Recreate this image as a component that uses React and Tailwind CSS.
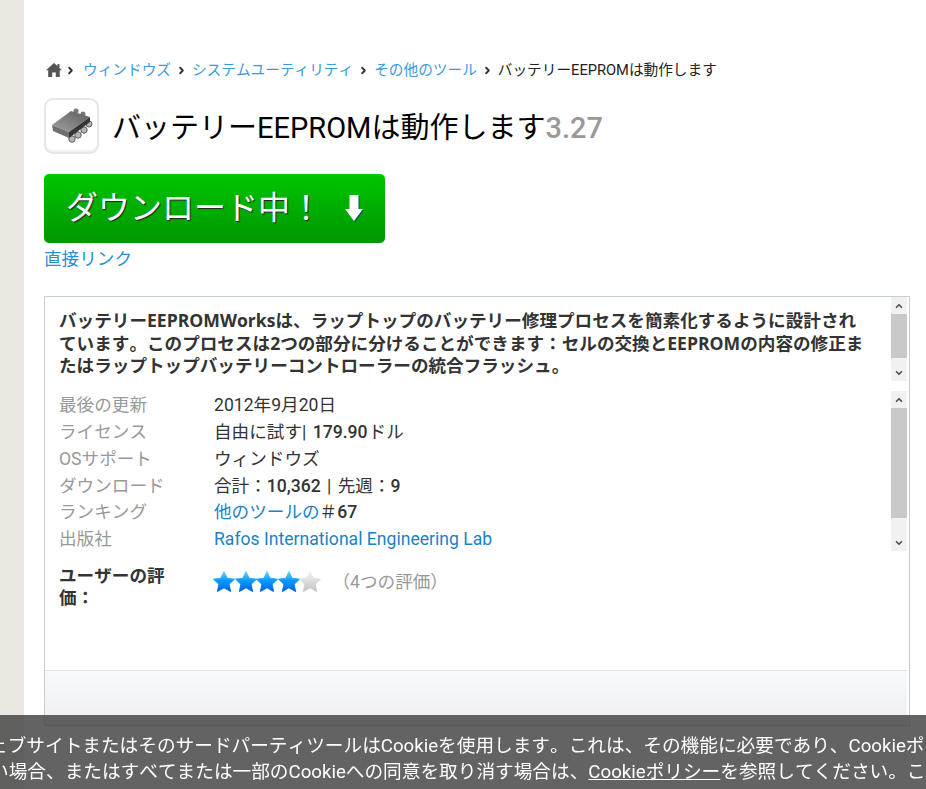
import { ChevronRight, ChevronUp, ChevronDown } from "lucide-react";

const crumbs = ["ウィンドウズ", "システムユーティリティ", "その他のツール"];

const Num = ({ children }) => <span className="font-medium">{children}</span>;

const rows = [
  { label: "最後の更新", value: "2012年9月20日" },
  { label: "ライセンス", value: <>自由に試す| <span className="ml-[2px] font-medium">179.90</span><span className="ml-[1px]">ドル</span></> },
  { label: "OSサポート", value: "ウィンドウズ" },
  { label: "ダウンロード", value: <>合計：<Num>10,362</Num><span className="mx-[2px]"> | </span>先週：<Num>9</Num></> },
  { label: "ランキング", value: <><a className="text-[#1a82c4]">他のツールの</a>＃<Num>67</Num></> },
  { label: "出版社", value: <a className="text-[#1a82c4]">Rafos International Engineering Lab</a> },
];

const Scrollbar = ({ thumb }) => (
  <div className="flex w-[16px] shrink-0 flex-col bg-[#f1f1f1]">
    <div className="flex h-[17px] items-center justify-center">
      <ChevronUp size={10} strokeWidth={4} className="text-[#505050]" />
    </div>
    <div className="bg-[#c8c8c8]" style={{ height: thumb }} />
    <div className="flex-1" />
    <div className="flex h-[17px] items-center justify-center">
      <ChevronDown size={10} strokeWidth={4} className="text-[#505050]" />
    </div>
  </div>
);

const Star = ({ on }) => (
  <svg width="22" height="22" viewBox="0 0 22 22" className="-mr-[0.5px]">
    <path
      d="M11 0.500l3.200 6.800 7.300 .9-5.400 5 1.500 7.300L11 16.800 4.400 20.500l1.500-7.300-5.400-5 7.300-.9z"
      fill={on ? "url(#starOn)" : "url(#starOff)"}
      stroke={on ? "url(#starOn)" : "url(#starOff)"}
      strokeWidth="1"
      strokeLinejoin="round"
    />
  </svg>
);

const ChipIcon = () => (
  <svg width="42" height="36" viewBox="0 0 42 36">
    <defs>
      <linearGradient id="chipTop" x1="0" y1="1" x2="1" y2="0">
        <stop offset="0" stopColor="#a2a2a2" />
        <stop offset="1" stopColor="#5c5c5c" />
      </linearGradient>
    </defs>
    <circle cx="21" cy="31" r="3.200" fill="#b5b5b5" stroke="#5e5e5e" />
    <circle cx="27" cy="27" r="3.200" fill="#b5b5b5" stroke="#5e5e5e" />
    <circle cx="33" cy="22" r="3.200" fill="#b5b5b5" stroke="#5e5e5e" />
    <circle cx="38" cy="16" r="3" fill="#b5b5b5" stroke="#5e5e5e" />
    <circle cx="25" cy="3" r="2.500" fill="#777" />
    <circle cx="32" cy="6" r="2.500" fill="#777" />
    <path d="M1 17L20 3l19 6-21 15z" fill="url(#chipTop)" />
    <path d="M1 17l17 7v6L2 23z" fill="#707070" />
    <path d="M18 24l21-15v5L18 30z" fill="#353535" />
  </svg>
);

export default function App() {
  return (
    <div className="flex h-screen overflow-hidden bg-white font-['Roboto','Noto_Sans_CJK_JP',sans-serif] text-[17.6px] text-[#333] [font-kerning:none]">
      <svg width="0" height="0" className="absolute">
        <defs>
          <linearGradient id="starOn" x1="0" y1="0" x2="0" y2="1">
            <stop offset="0" stopColor="#6fd0ff" />
            <stop offset="0.45" stopColor="#0a9cff" />
            <stop offset="1" stopColor="#0060e0" />
          </linearGradient>
          <linearGradient id="starOff" x1="0" y1="0" x2="0" y2="1">
            <stop offset="0" stopColor="#f2f2f2" />
            <stop offset="1" stopColor="#c4c4c4" />
          </linearGradient>
        </defs>
      </svg>

      <aside className="w-[24px] shrink-0 bg-[#ebe8e1]" />

      <main className="min-w-0 flex-1 pl-[20px] pr-[16px] pt-[59px]">
        <nav className="flex h-[22px] items-center text-[14.67px] leading-[22px]">
          <svg width="16" height="14" viewBox="0 0 16 14" className="ml-[2px] shrink-0">
            <path d="M8 0L0 7.200h2.200V14h4V9.500h3.600V14h4V7.200H16l-2.500-2.300V1h-2v2.100z" fill="#555" />
          </svg>
          <ChevronRight size={11} strokeWidth={4} className="ml-[3px] mr-[7px] shrink-0 text-[#333]" />
          {crumbs.map((c) => (
            <span key={c} className="flex items-center">
              <a className="text-[#3a9ad9]">{c}</a>
              <ChevronRight size={11} strokeWidth={4} className="mx-[5px] shrink-0 text-[#333]" />
            </span>
          ))}
          <span className="text-[#222]">バッテリーEEPROMは動作します</span>
        </nav>

        <div className="mt-[17px] flex h-[56px] items-center">
          <div className="flex h-[56px] w-[55px] shrink-0 items-center justify-center rounded-[9px] border-2 border-[#e6e6e6] shadow-[inset_0_-2px_0_#f2f2f2]">
            <ChipIcon />
          </div>
          <h1 className="ml-[13px] mt-[5px] whitespace-nowrap text-[29px] font-normal text-black">
            バッテリーEEPROMは動作します<span className="font-medium text-[#999]">3.27</span>
          </h1>
        </div>

        <a className="mt-[20px] flex h-[69px] w-[341px] items-center rounded-[5px] border-t-2 border-[#0c0] bg-gradient-to-b from-[#00c400] to-[#009600] pb-[4px] pl-[22px] text-[32px] text-white [text-shadow:1px_1px_1px_#222]">
          <span className="whitespace-nowrap">ダウンロード中！</span>
          <svg width="18" height="26" viewBox="0 0 18 26" className="ml-[23px] drop-shadow-[1px_1px_0_#055]">
            <path d="M4.500 0h9v14H18L9 26 0 14h4.500z" fill="#fff" />
          </svg>
        </a>
        <a className="mt-[3px] block leading-[26px] text-[#2b8fd0]">直接リンク</a>

        <section className="mt-[24px] flex h-[430px] flex-col border border-[#c5cdd5] pr-[2px]">
          <div className="flex h-[84px] overflow-hidden">
            <p className="min-w-0 flex-1 pl-[14px] pr-[20px] pt-[12px] font-['Open_Sans','Noto_Sans_CJK_JP',sans-serif] font-bold leading-[22.5px]">
              バッテリーEEPROMWorksは、ラップトップのバッテリー修理プロセスを簡素化するように設計されています。このプロセスは2つの部分に分けることができます：セルの交換とEEPROMの内容の修正またはラップトップバッテリーコントローラーの統合フラッシュ。
            </p>
            <Scrollbar thumb={44} />
          </div>

          <div className="mt-[10px] flex h-[160px] overflow-hidden">
            <dl className="min-w-0 flex-1 pl-[14px] pt-[1px]">
              {rows.map((r) => (
                <div key={r.label} className="flex h-[26.8px] items-center">
                  <dt className="w-[155px] shrink-0 text-[#999]">{r.label}</dt>
                  <dd>{r.value}</dd>
                </div>
              ))}
            </dl>
            <Scrollbar thumb={110} />
          </div>

          <div className="flex pl-[14px] pt-[14px]">
            <div className="w-[110px] shrink-0 font-bold leading-[22px]">ユーザーの評価：</div>
            <div className="ml-[44px] mt-[6px] flex h-[22px] items-center">
              <Star on />
              <Star on />
              <Star on />
              <Star on />
              <Star />
              <span className="ml-[12px] text-[#999]">（4つの評価）</span>
            </div>
          </div>

          <div className="mt-auto h-[55px] border-t border-[#dfe3e8] bg-gradient-to-b from-[#f9fafb] to-[#eceef1]" />
        </section>
      </main>

      <div className="fixed inset-x-0 bottom-0 h-[74px] overflow-hidden bg-[#3c3c3c]/80 pt-[18px] text-[18.67px] leading-[26px] text-white">
        <div className="-ml-[11px] whitespace-nowrap">
          ェブサイトまたはそのサードパーティツールはCookieを使用します。これは、その機能に必要であり、Cookieポリ
        </div>
        <div className="-ml-[10px] whitespace-nowrap">
          い場合、またはすべてまたは一部のCookieへの同意を取り消す場合は、<a className="underline">Cookieポリシー</a>を参照してください。この
        </div>
      </div>
    </div>
  );
}
